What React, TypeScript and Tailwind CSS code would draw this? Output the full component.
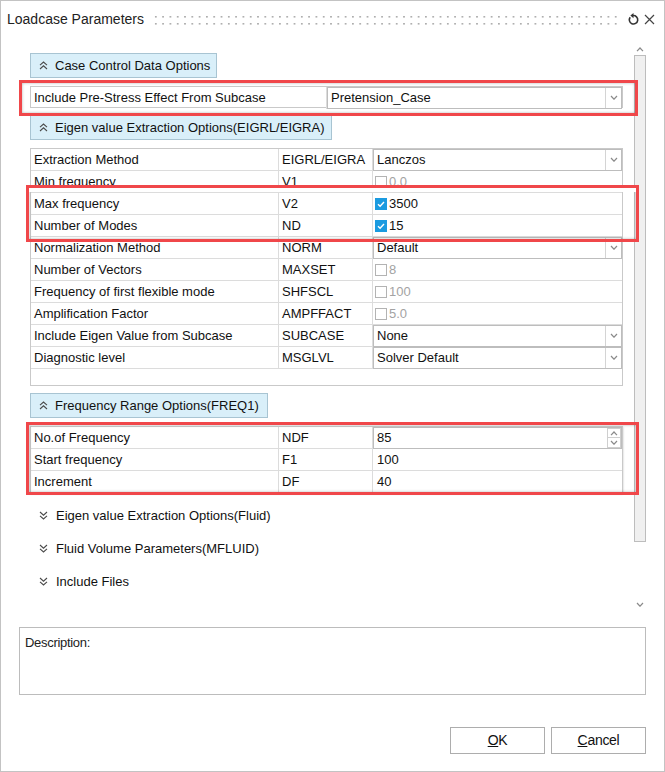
import React from "react";

const FONT = "font-['Liberation_Sans',Arial,sans-serif]";

function DoubleUp() {
  return (
    <svg width="9" height="9" viewBox="0 0 9 9" className="shrink-0">
      <path d="M1 4.2 L4.5 1 L8 4.2" fill="none" stroke="#4a4a4a" strokeWidth="1.1" />
      <path d="M1 8 L4.5 4.8 L8 8" fill="none" stroke="#4a4a4a" strokeWidth="1.1" />
    </svg>
  );
}

function DoubleDown() {
  return (
    <svg width="9" height="9" viewBox="0 0 9 9" className="shrink-0">
      <path d="M1 1 L4.5 4.2 L8 1" fill="none" stroke="#4a4a4a" strokeWidth="1.1" />
      <path d="M1 4.8 L4.5 8 L8 4.8" fill="none" stroke="#4a4a4a" strokeWidth="1.1" />
    </svg>
  );
}

function SmallChevron({ up = false }: { up?: boolean }) {
  return (
    <svg width="8" height="5" viewBox="0 0 8 5">
      <path
        d={up ? "M1 4.2 L4 1 L7 4.2" : "M1 1 L4 4.2 L7 1"}
        fill="none"
        stroke="#8a8a8a"
        strokeWidth="1.2"
      />
    </svg>
  );
}

function SectionButton({ label, w }: { label: string; w: string }) {
  return (
    <div
      className={`flex h-[25px] items-center gap-[7px] border border-[#a8c4d2] bg-[#d9eff9] pl-[8px] text-[13px] text-[#111] ${w}`}
    >
      <DoubleUp />
      <span>{label}</span>
    </div>
  );
}

function Combo({ value }: { value: string }) {
  return (
    <div className="flex h-full w-full items-stretch border border-[#bdbdbd] bg-white">
      <div className="flex flex-1 items-center pl-[3px]">{value}</div>
      <div className="flex w-[16px] items-center justify-center border-l border-[#d4d4d4]">
        <SmallChevron />
      </div>
    </div>
  );
}

function Check({ checked, value }: { checked: boolean; value: string }) {
  return (
    <div className="flex h-full items-center pl-[2px]">
      {checked ? (
        <svg width="12" height="12" viewBox="0 0 12 12" className="mr-[2px]">
          <rect x="0" y="0" width="12" height="12" fill="#1b9be0" />
          <path d="M3 6.2 L5.1 8.2 L9 4" fill="none" stroke="#fff" strokeWidth="1.4" />
        </svg>
      ) : (
        <div className="mr-[2px] h-[12px] w-[12px] border border-[#b3b3b3] bg-white" />
      )}
      <span className={checked ? "text-[#111]" : "text-[#a3a3a3]"}>{value}</span>
    </div>
  );
}

type Val =
  | { t: "combo"; s: string }
  | { t: "cb"; checked: boolean; s: string };

const eigRows: { l: string; c: string; v: Val }[] = [
  { l: "Extraction Method", c: "EIGRL/EIGRA", v: { t: "combo", s: "Lanczos" } },
  { l: "Min frequency", c: "V1", v: { t: "cb", checked: false, s: "0.0" } },
  { l: "Max frequency", c: "V2", v: { t: "cb", checked: true, s: "3500" } },
  { l: "Number of Modes", c: "ND", v: { t: "cb", checked: true, s: "15" } },
  { l: "Normalization Method", c: "NORM", v: { t: "combo", s: "Default" } },
  { l: "Number of Vectors", c: "MAXSET", v: { t: "cb", checked: false, s: "8" } },
  { l: "Frequency of first flexible mode", c: "SHFSCL", v: { t: "cb", checked: false, s: "100" } },
  { l: "Amplification Factor", c: "AMPFFACT", v: { t: "cb", checked: false, s: "5.0" } },
  { l: "Include Eigen Value from Subcase", c: "SUBCASE", v: { t: "combo", s: "None" } },
  { l: "Diagnostic level", c: "MSGLVL", v: { t: "combo", s: "Solver Default" } },
];

function Row({ l, c, children }: { l: string; c: string; children: React.ReactNode }) {
  return (
    <div className="grid h-[22px] grid-cols-[248px_94px_1fr] border-b border-[#dcdcdc]">
      <div className="flex items-center border-r border-[#dcdcdc] pl-[3px]">{l}</div>
      <div className="flex items-center border-r border-[#dcdcdc] pl-[3px]">{c}</div>
      <div className="flex items-stretch">{children}</div>
    </div>
  );
}

function Spin({ value }: { value: string }) {
  return (
    <div className="flex h-full w-full items-stretch border border-[#bdbdbd] bg-white">
      <div className="flex flex-1 items-center pl-[3px]">{value}</div>
      <div className="flex w-[14px] flex-col">
        <div className="flex flex-1 items-center justify-center border border-[#cfcfcf]">
          <SmallChevron up />
        </div>
        <div className="flex flex-1 items-center justify-center border border-t-0 border-[#cfcfcf]">
          <SmallChevron />
        </div>
      </div>
    </div>
  );
}

function Collapsed({ label }: { label: string }) {
  return (
    <div className="flex h-[33px] items-center gap-[8px] pl-[38px] text-[13px] text-[#111]">
      <DoubleDown />
      <span>{label}</span>
    </div>
  );
}

export default function App() {
  return (
    <div
      className={`relative flex h-[772px] w-[665px] flex-col border border-[#c3c3c3] bg-white ${FONT} text-[13px] text-[#111]`}
    >
      {/* Title bar */}
      <div className="flex h-[37px] shrink-0 items-center pl-[6px] pr-[9px]">
        <span className="text-[14px] text-[#222]">Loadcase Parameters</span>
        <svg className="ml-[10px] flex-1" height="12" width="100%">
          <defs>
            <pattern id="grip" width="7.3" height="7" patternUnits="userSpaceOnUse">
              <rect x="1" y="2" width="1.6" height="1.6" fill="#a5a5a5" />
            </pattern>
          </defs>
          <rect x="0" y="0" width="100%" height="12" fill="url(#grip)" />
        </svg>
        <svg width="12" height="13" viewBox="0 0 12 13" className="ml-[8px]">
          <path d="M3.2 4.2 A4.2 4.2 0 1 0 6 2.6" fill="none" stroke="#333" strokeWidth="1.6" />
          <path d="M6.5 0 L6.5 5.2 L3.4 2.6 Z" fill="#333" />
        </svg>
        <svg width="11" height="11" viewBox="0 0 11 11" className="ml-[5px]">
          <path d="M1 1 L10 10 M10 1 L1 10" stroke="#444" strokeWidth="1.2" />
        </svg>
      </div>

      {/* Scroll region */}
      <div className="flex h-[575px] shrink-0">
        <div className="flex w-[633px] flex-col pl-[29px]">
          <div className="mt-[15px]">
            <SectionButton label="Case Control Data Options" w="w-[187px]" />
          </div>
          <div className="mt-[8px] grid h-[22px] w-[593px] grid-cols-[296px_1fr] border border-[#c9c9c9]">
            <div className="flex items-center border-r border-[#dcdcdc] pl-[3px]">
              Include Pre-Stress Effect From Subcase
            </div>
            <Combo value="Pretension_Case" />
          </div>
          <div className="mt-[7px]">
            <SectionButton label="Eigen value Extraction Options(EIGRL/EIGRA)" w="w-[302px]" />
          </div>
          <div className="mt-[8px] h-[238px] w-[593px] border border-[#c9c9c9]">
            {eigRows.map((r) => (
              <Row key={r.l} l={r.l} c={r.c}>
                {r.v.t === "combo" ? (
                  <Combo value={r.v.s} />
                ) : (
                  <Check checked={r.v.checked} value={r.v.s} />
                )}
              </Row>
            ))}
          </div>
          <div className="mt-[7px]">
            <SectionButton label="Frequency Range Options(FREQ1)" w="w-[238px]" />
          </div>
          <div className="mt-[8px] w-[593px] border border-b-0 border-[#c9c9c9] shadow-[0_1px_2px_rgba(0,0,0,0.25)]">
            <Row l="No.of Frequency" c="NDF">
              <Spin value="85" />
            </Row>
            <Row l="Start frequency" c="F1">
              <div className="flex items-center pl-[4px]">100</div>
            </Row>
            <Row l="Increment" c="DF">
              <div className="flex items-center pl-[4px]">40</div>
            </Row>
          </div>
          <div className="mt-[6px] -ml-[29px]">
            <Collapsed label="Eigen value Extraction Options(Fluid)" />
            <Collapsed label="Fluid Volume Parameters(MFLUID)" />
            <Collapsed label="Include Files" />
          </div>
        </div>

        {/* Scrollbar */}
        <div className="flex w-[12px] flex-col items-center">
          <div className="mt-[7px] flex h-[8px] items-center">
            <SmallChevron up />
          </div>
          <div className="mt-[2px] h-[487px] w-[12px] border border-[#bdbdbd] bg-[#f0f0f0]" />
          <div className="mt-[58px] flex h-[8px] items-center">
            <SmallChevron />
          </div>
        </div>
      </div>

      {/* Description */}
      <div className="ml-[18px] mt-[14px] h-[68px] w-[627px] border border-[#bcbcbc] px-[5px] pt-[5px] text-[13px] tracking-[-0.3px] text-[#222]">
        Description:
      </div>

      {/* Buttons */}
      <div className="mt-[32px] flex justify-end gap-[6px] pr-[18px]">
        <button className="flex h-[27px] w-[95px] items-center justify-center border border-[#adadad] bg-white text-[14px] tracking-[-0.3px] text-[#111]">
          <span>
            <span className="underline">O</span>K
          </span>
        </button>
        <button className="flex h-[27px] w-[95px] items-center justify-center border border-[#adadad] bg-white text-[14px] tracking-[-0.3px] text-[#111]">
          <span>
            <span className="underline">C</span>ancel
          </span>
        </button>
      </div>

      {/* Annotation boxes */}
      <div className="pointer-events-none absolute left-[18px] top-[79px] h-[36px] w-[619px] border-[3px] border-[#f0474a] shadow-[inset_0_0_3px_rgba(0,0,0,0.3)]" />
      <div className="pointer-events-none absolute left-[25px] top-[184px] h-[57px] w-[613px] border-[3px] border-[#f0474a] shadow-[inset_0_0_3px_rgba(0,0,0,0.3)]">
        <div className="h-[4px] w-full bg-white" />
      </div>
      <div className="pointer-events-none absolute left-[25px] top-[421px] h-[73px] w-[613px] border-[3px] border-[#f0474a] shadow-[inset_0_0_3px_rgba(0,0,0,0.3)]" />
    </div>
  );
}
